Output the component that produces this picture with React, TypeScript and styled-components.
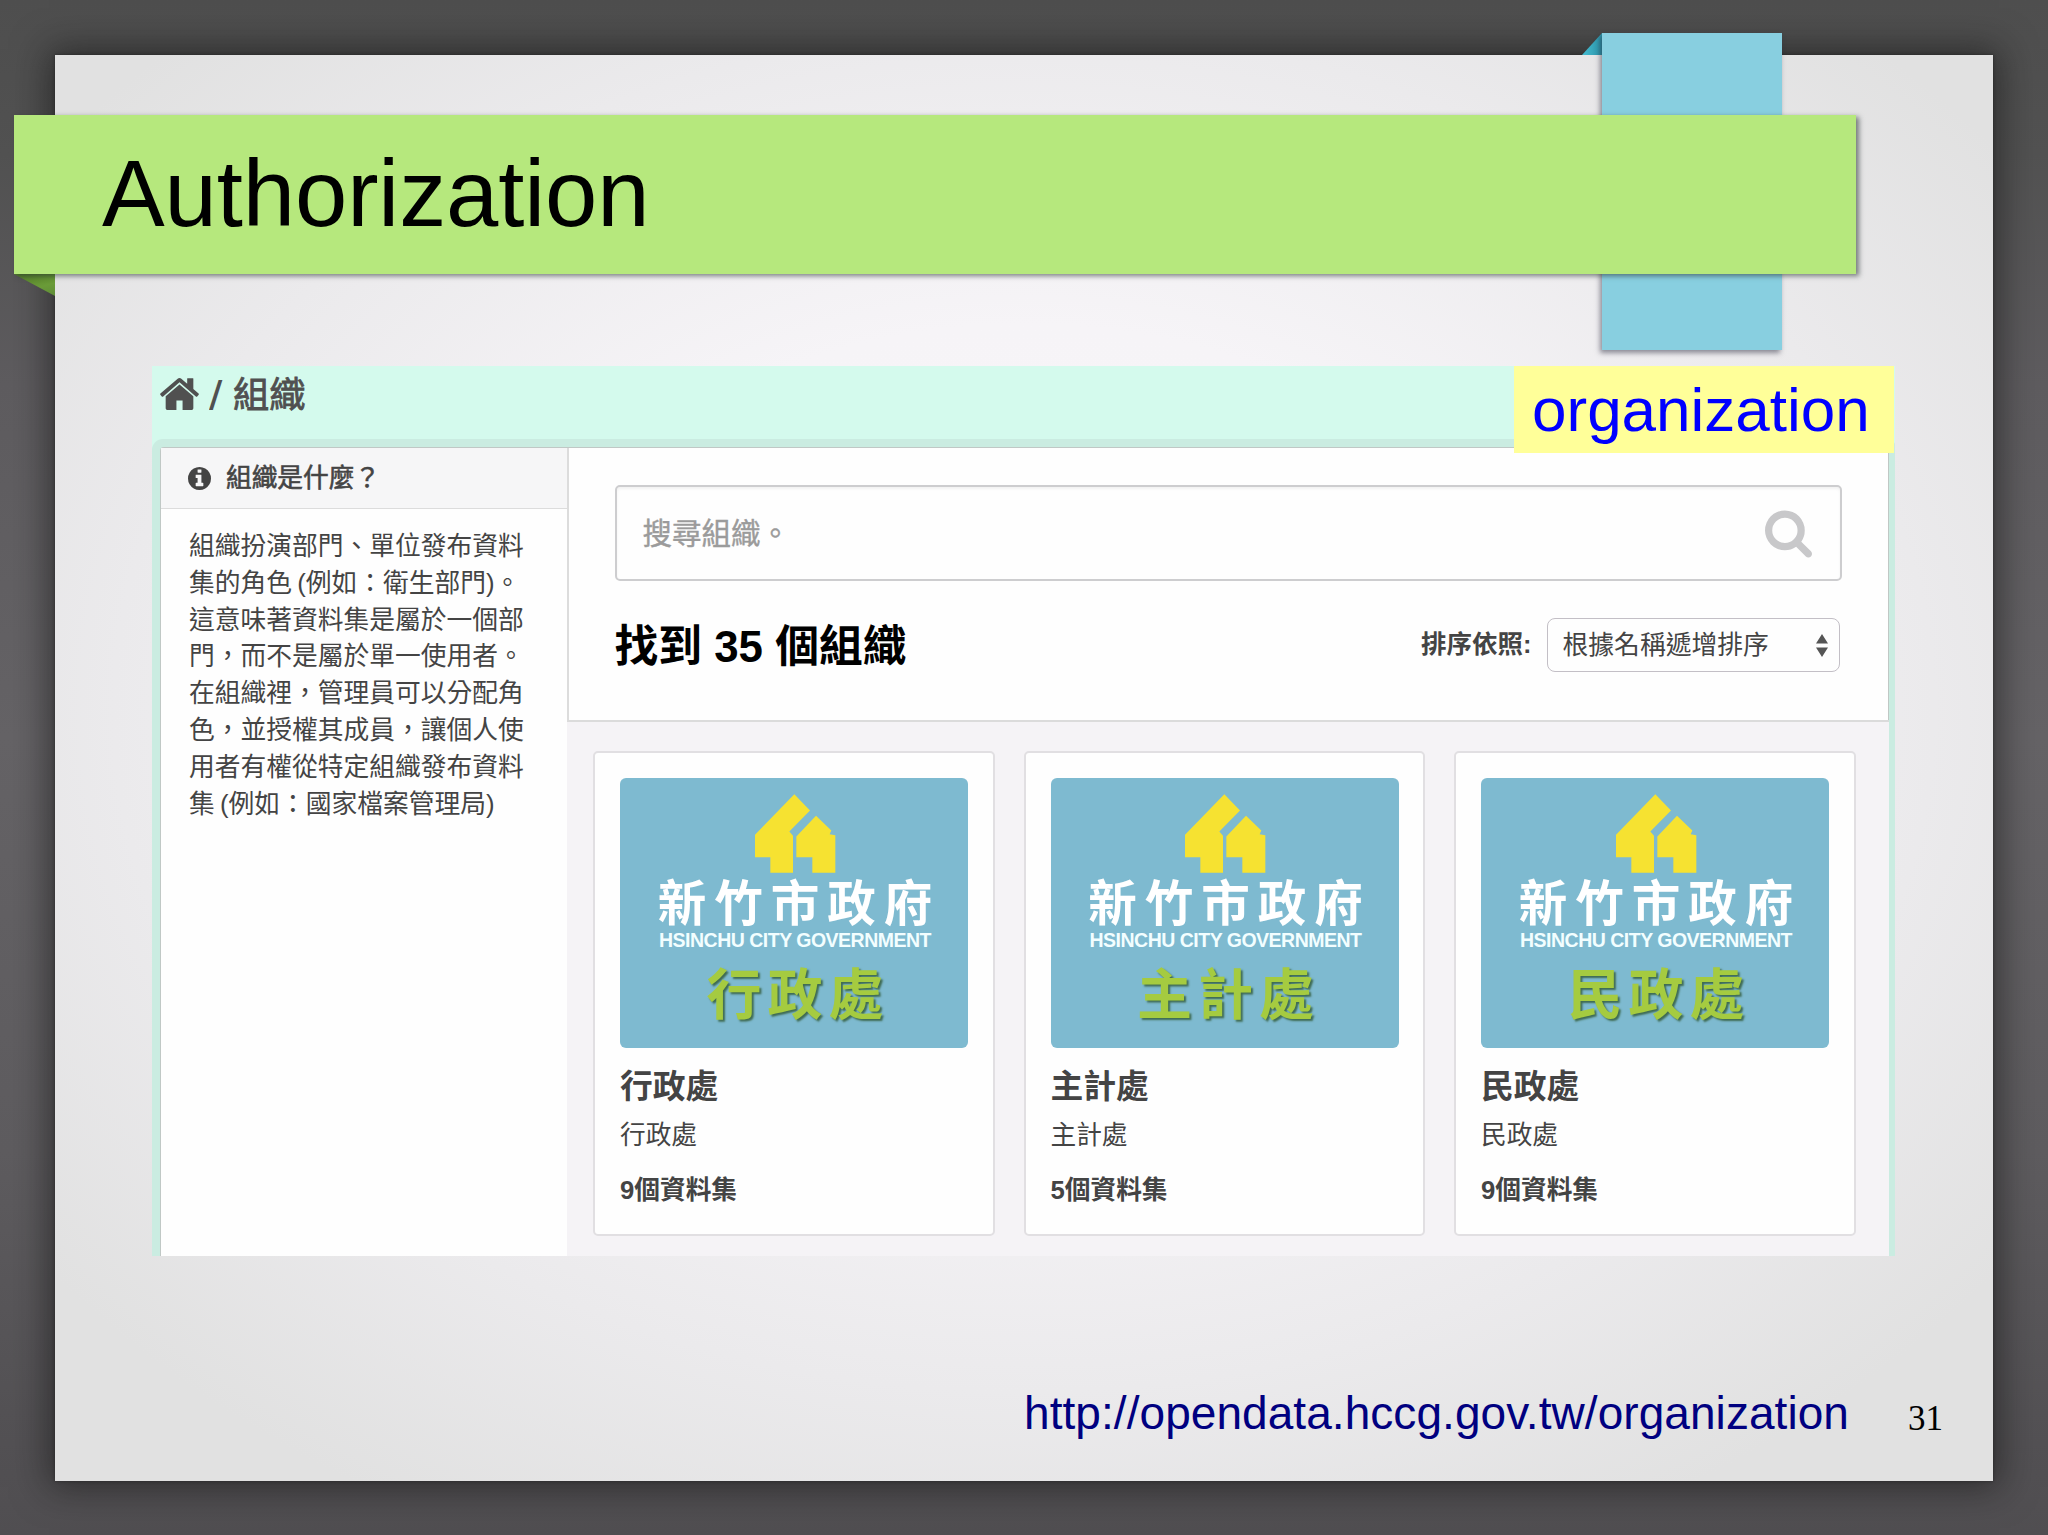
import React from "react";
import styled, { createGlobalStyle } from "styled-components";

const Global = createGlobalStyle`
  * { box-sizing: border-box; }
  body { margin: 0; overflow: hidden; }
`;

const sans = `"Liberation Sans", "Noto Sans CJK TC", sans-serif`;

const Slide = styled.div`
  width: 2048px;
  height: 1535px;
  padding: 55px 55px 54px;
  overflow: hidden;
  background: linear-gradient(180deg, #4e4e4e 0%, #525252 10%, #5e5c5f 25%, #656366 48%, #5e5c5f 75%, #545255 92%, #504e51 100%);
  font-family: ${sans};
  text-spacing-trim: space-all;
`;

const Paper = styled.main`
  position: relative;
  width: 1938px;
  height: 1426px;
  display: flex;
  flex-direction: column;
  background: radial-gradient(ellipse 1230px 920px at 50% 46%, #f8f6f9 0%, #f6f4f7 42%, #ebeaec 74%, #e1e1e1 100%);
  box-shadow: 0 0 34px 6px rgba(20, 20, 20, 0.6), 0 0 3px rgba(20, 20, 20, 0.5);
`;

const Ribbon = styled.div`
  position: absolute;
  left: 1547px;
  top: -22px;
  width: 180px;
  height: 317px;
  background: #88cfe0;
  box-shadow: -2px 3px 5px rgba(40, 40, 60, 0.5);
`;

const RibbonFold = styled.div`
  position: absolute;
  left: 1527px;
  top: -22px;
  width: 20px;
  height: 22px;
  background: linear-gradient(90deg, #45bdd2, #2c93a8);
  clip-path: polygon(100% 0, 100% 100%, 0 100%);
`;

const TitleBand = styled.header`
  position: relative;
  z-index: 1;
  width: 1842px;
  height: 159px;
  margin: 60px 0 0 -41px;
  padding: 0 0 2px 88px;
  display: flex;
  align-items: center;
  background: #b6e87d;
  box-shadow: 3px 2px 5px rgba(40, 50, 50, 0.6);
`;

const Title = styled.h1`
  margin: 0;
  font-size: 94px;
  line-height: 110px;
  font-weight: 400;
  letter-spacing: -0.1px;
  color: #000;
`;

const BandFold = styled.div`
  position: absolute;
  left: -41px;
  top: 219px;
  width: 41px;
  height: 22px;
  background: linear-gradient(165deg, #4f7a26 0%, #6a9b38 60%, #5f8c38 100%);
  clip-path: polygon(0 0, 100% 0, 100% 100%);
`;

const Capture = styled.section`
  position: relative;
  width: 1743px;
  height: 890px;
  margin: 92px 0 0 97px;
  display: flex;
  flex-direction: column;
  overflow: hidden;
  background: #d4faed;
  color: #444;
`;

const Crumbs = styled.nav`
  height: 81px;
  flex: none;
  padding: 10px 0 0 8px;
  display: flex;
  align-items: flex-start;
  font-size: 36.3px;
  line-height: 40px;
  color: #505050;
  -webkit-text-stroke: 0.8px #505050;
  & > svg { margin-top: 2px; }
`;

const Slash = styled.span`
  width: 24px;
  margin-left: 10px;
  font-size: 40px;
  -webkit-text-stroke: 0;
  transform: scaleX(1.2);
  transform-origin: left;
`;

const Panel = styled.div`
  flex: 1;
  width: 1729px;
  margin-left: 8px;
  display: grid;
  grid-template-columns: 406px 1fr;
  border: 1px solid #c0c8c5;
  border-bottom: 0;
  border-radius: 4px 4px 0 0;
  background: #fefefe;
  box-shadow: 0 0 0 8px #caece1;
`;

const Side = styled.aside`
  background: #fefefe;
`;

const SideHead = styled.h2`
  margin: 0;
  height: 61px;
  padding: 0 0 0 27px;
  display: flex;
  align-items: center;
  gap: 15px;
  background: #f6f6f7;
  border-bottom: 1.5px solid #dcdcdc;
  font-size: 25.7px;
  font-weight: 400;
  line-height: 36px;
  -webkit-text-stroke: 0.6px #444;
`;

const SideText = styled.p`
  margin: 19px 0 0 28px;
  font-size: 25.75px;
  line-height: 36.8px;
  word-spacing: -2px;
  white-space: pre;
`;

const Main = styled.div`
  display: flex;
  flex-direction: column;
`;

const Tools = styled.div`
  height: 274px;
  flex: none;
  padding: 37px 47px 0 45.5px;
  border-left: 2px solid #dcdcdc;
  border-bottom: 2px solid #dbdbdb;
`;

const Search = styled.div`
  width: 1227px;
  height: 96px;
  padding: 2px 28px 0 26px;
  display: flex;
  align-items: center;
  justify-content: space-between;
  border: 2px solid #cdcdcf;
  border-radius: 5px;
  box-shadow: inset 0 2px 3px rgba(0, 0, 0, 0.05);
  font-size: 29.5px;
  line-height: 40px;
  color: #9b9b9b;
  -webkit-text-stroke: 0.4px #9b9b9b;
`;

const ResultRow = styled.div`
  width: 1225px;
  margin-top: 37px;
  height: 54px;
  display: flex;
  align-items: center;
  justify-content: space-between;
`;

const Found = styled.h3`
  margin: 4px 0 0;
  font-size: 43.8px;
  line-height: 54px;
  font-weight: 700;
  color: #000;
`;

const Sort = styled.div`
  display: flex;
  align-items: center;
  gap: 15px;
  font-size: 25.8px;
  line-height: 36px;
`;

const SortLabel = styled.span`
  margin-top: -2px;
  font-size: 25.5px;
  font-weight: 700;
`;

const Select = styled.div`
  width: 293px;
  height: 54px;
  padding: 0 11px 0 15px;
  display: flex;
  align-items: center;
  justify-content: space-between;
  border: 1.5px solid #c3bfc6;
  border-radius: 8px;
`;

const Cards = styled.div`
  flex: 1;
  padding: 29px 0 0 26px;
  display: grid;
  grid-template-columns: repeat(3, 401.5px);
  gap: 29px;
  align-items: start;
  background: #f5f3f6;
`;

const Card = styled.article`
  height: 485px;
  padding: 25px;
  border: 2px solid #e1dfe2;
  border-radius: 5px;
  background: #fefefe;
`;

const Logo = styled.div`
  width: 348px;
  height: 270px;
  padding-top: 15px;
  display: flex;
  flex-direction: column;
  align-items: center;
  border-radius: 6px;
  background: #7ebad0;
`;

const Mark = styled.svg`
  width: 82px;
  height: 81px;
  flex: none;
  margin-left: 1px;
`;

const City = styled.div`
  margin: 5px -10px 0 0;
  font-size: 48.5px;
  line-height: 50px;
  letter-spacing: 8px;
  font-weight: 700;
  color: #fff;
`;

const CityEn = styled.div`
  font-size: 19.5px;
  line-height: 22px;
  letter-spacing: -0.5px;
  font-weight: 700;
  color: #f2feff;
  margin-left: 2px;
  white-space: nowrap;
`;

const Dept = styled.div`
  margin: 14px -8px 0 0;
  font-size: 55px;
  line-height: 60px;
  letter-spacing: 6px;
  font-weight: 700;
  color: #a5cb40;
  text-shadow: 2px 2px 2px #3f6b52;
`;

const Name = styled.h4`
  margin: 19px 0 0;
  font-size: 32.8px;
  line-height: 40px;
  font-weight: 700;
`;

const Desc = styled.p`
  margin: 10px 0 0;
  font-size: 25.7px;
  line-height: 36px;
`;

const Count = styled.p`
  margin: 19px 0 0;
  font-size: 25.7px;
  line-height: 36px;
  font-weight: 700;
`;

const Tag = styled.div`
  position: absolute;
  right: 1px;
  top: 0;
  width: 380px;
  height: 87px;
  padding: 0 0 0 18px;
  display: flex;
  align-items: center;
  background: #ffff99;
  color: #00f;
  font-size: 62px;
  line-height: 70px;
`;

const Footer = styled.footer`
  margin: 131px 50px 0 auto;
  width: 919px;
  display: flex;
  justify-content: space-between;
`;

const Url = styled.span`
  font-size: 46px;
  line-height: 52px;
  letter-spacing: 0.06px;
  color: #000080;
`;

const PageNo = styled.span`
  font-family: "Liberation Serif", serif;
  font-size: 35px;
  line-height: 64px;
  color: #000;
`;

const HomeIcon = () => (
  <svg width="39" height="32" viewBox="20 250 1624 1290" preserveAspectRatio="none" fill="#505050">
    <path d="M1408 992v480q0 26-19 45t-45 19h-384v-384h-256v384h-384q-26 0-45-19t-19-45v-480q0-1 .5-3t.5-3l575-474 575 474q1 2 1 6zm223-69l-62 74q-8 9-21 11h-3q-13 0-21-7l-692-577-692 577q-12 8-24 7-13-2-21-11l-62-74q-8-10-7-23.5t11-21.5l719-599q32-26 76-26t76 26l244 204v-195q0-14 9-23t23-9h192q14 0 23 9t9 23v408l219 182q10 8 11 21.5t-7 23.5z" />
  </svg>
);

const InfoIcon = () => (
  <svg width="23" height="23" viewBox="128 128 1536 1536" fill="#444">
    <path d="M1152 1376v-160q0-14-9-23t-23-9h-96v-512q0-14-9-23t-23-9h-320q-14 0-23 9t-9 23v160q0 14 9 23t23 9h96v320h-96q-14 0-23 9t-9 23v160q0 14 9 23t23 9h448q14 0 23-9t9-23zm-128-896v-160q0-14-9-23t-23-9h-192q-14 0-23 9t-9 23v160q0 14 9 23t23 9h192q14 0 23-9t9-23zm640 416q0 209-103 385.5t-279.5 279.5-385.5 103-385.5-103-279.5-279.5-103-385.5 103-385.5 279.5-279.5 385.5-103 385.5 103 279.5 279.5 103 385.5z" />
  </svg>
);

const SearchIcon = () => (
  <svg width="47" height="48" viewBox="64 128 1664 1664" fill="#c8c8ca">
    <path d="M1216 832q0-185-131.5-316.5t-316.5-131.5-316.5 131.5-131.5 316.5 131.5 316.5 316.5 131.5 316.5-131.5 131.5-316.5zm512 832q0 52-38 90t-90 38q-54 0-90-38l-343-342q-179 124-399 124-143 0-273.5-55.5t-225-150-150-225-55.5-273.5 55.5-273.5 150-225 225-150 273.5-55.5 273.5 55.5 225 150 150 225 55.5 273.5q0 220-124 399l343 343q37 37 37 90z" />
  </svg>
);

const Arrows = () => (
  <svg width="12" height="23" viewBox="0 0 12 23" fill="#555">
    <path d="M6 0l6 9.5H0zM6 23l6-9.5H0z" />
  </svg>
);

const CityMark = () => (
  <Mark viewBox="522 160 246 242">
    <path
      fill="#f6e231"
      d="M643 163L690 212 628 275 639 288V399H571V352H525V285zM708 228L754 272 749 283 766 286V399H697V352H649V290z"
    />
  </Mark>
);

const sideLines = [
  "組織扮演部門、單位發布資料",
  "集的角色 (例如：衛生部門)。",
  "這意味著資料集是屬於一個部",
  "門，而不是屬於單一使用者。",
  "在組織裡，管理員可以分配角",
  "色，並授權其成員，讓個人使",
  "用者有權從特定組織發布資料",
  "集 (例如：國家檔案管理局)",
];

const orgs = [
  { name: "行政處", count: 9 },
  { name: "主計處", count: 5 },
  { name: "民政處", count: 9 },
];

export default function App() {
  return (
    <Slide lang="zh-Hant-TW">
      <Global />
      <Paper>
        <RibbonFold />
        <Ribbon />
        <BandFold />
        <TitleBand>
          <Title>Authorization</Title>
        </TitleBand>
        <Capture>
          <Crumbs>
            <HomeIcon />
            <Slash>/</Slash>
            <span>組織</span>
          </Crumbs>
          <Panel>
            <Side>
              <SideHead>
                <InfoIcon />
                組織是什麼？
              </SideHead>
              <SideText>{sideLines.join("\n")}</SideText>
            </Side>
            <Main>
              <Tools>
                <Search>
                  <span>搜尋組織。</span>
                  <SearchIcon />
                </Search>
                <ResultRow>
                  <Found>找到 35 個組織</Found>
                  <Sort>
                    <SortLabel>排序依照:</SortLabel>
                    <Select>
                      <span>根據名稱遞增排序</span>
                      <Arrows />
                    </Select>
                  </Sort>
                </ResultRow>
              </Tools>
              <Cards>
                {orgs.map((o) => (
                  <Card key={o.name}>
                    <Logo>
                      <CityMark />
                      <City>新竹市政府</City>
                      <CityEn>HSINCHU CITY GOVERNMENT</CityEn>
                      <Dept>{o.name}</Dept>
                    </Logo>
                    <Name>{o.name}</Name>
                    <Desc>{o.name}</Desc>
                    <Count>{o.count}個資料集</Count>
                  </Card>
                ))}
              </Cards>
            </Main>
          </Panel>
          <Tag>organization</Tag>
        </Capture>
        <Footer>
          <Url>http://opendata.hccg.gov.tw/organization</Url>
          <PageNo>31</PageNo>
        </Footer>
      </Paper>
    </Slide>
  );
}
